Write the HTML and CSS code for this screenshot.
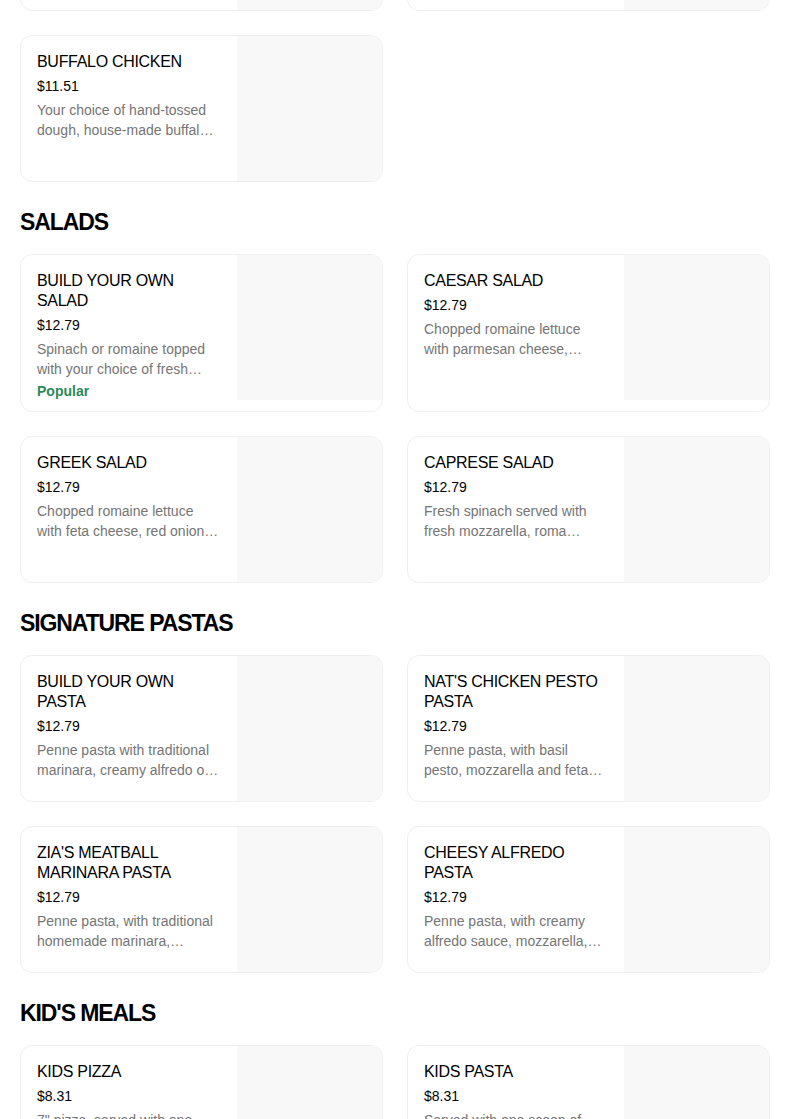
FILE: index.html
```html
<!DOCTYPE html>
<html>
	<head>
		<meta charset="UTF-8">
		<title>Menu</title>
		<link rel="stylesheet" href="styles.css">
	</head>
	<body>
		<main class="menu">
			<div class="grid">
				<div class="card">
					<div class="card_text">
						<h3 class="card_title">PEPPERONI</h3>
						<div class="card_price">$11.51</div>
						<p class="card_desc">Your choice of hand-tossed dough, house-made red sauce, mozzarella and pepperoni.</p>
					</div>
					<div class="card_img"></div>
				</div>
				<div class="card">
					<div class="card_text">
						<h3 class="card_title">MARGHERITA</h3>
						<div class="card_price">$11.51</div>
						<p class="card_desc">Your choice of hand-tossed dough, house-made red sauce, fresh mozzarella and basil.</p>
					</div>
					<div class="card_img"></div>
				</div>
				<div class="card">
					<div class="card_text">
						<h3 class="card_title">BUFFALO CHICKEN</h3>
						<div class="card_price">$11.51</div>
						<p class="card_desc">Your choice of hand-tossed dough, house-made buffalo sauce, mozzarella, grilled chicken, red onions and ranch drizzle.</p>
					</div>
					<div class="card_img"></div>
				</div>
			</div>

			<h2 class="section_title">SALADS</h2>
			<div class="grid">
				<div class="card">
					<div class="card_text">
						<h3 class="card_title">BUILD YOUR OWN SALAD</h3>
						<div class="card_price">$12.79</div>
						<p class="card_desc">Spinach or romaine topped with your choice of fresh vegetables, cheeses and dressing.</p>
						<div class="card_tag">Popular</div>
					</div>
					<div class="card_img"></div>
				</div>
				<div class="card">
					<div class="card_text">
						<h3 class="card_title">CAESAR SALAD</h3>
						<div class="card_price">$12.79</div>
						<p class="card_desc">Chopped romaine lettuce with parmesan cheese, croutons and caesar dressing.</p>
					</div>
					<div class="card_img"></div>
				</div>
				<div class="card">
					<div class="card_text">
						<h3 class="card_title">GREEK SALAD</h3>
						<div class="card_price">$12.79</div>
						<p class="card_desc">Chopped romaine lettuce with feta cheese, red onions, kalamata olives, tomatoes and greek dressing.</p>
					</div>
					<div class="card_img"></div>
				</div>
				<div class="card">
					<div class="card_text">
						<h3 class="card_title">CAPRESE SALAD</h3>
						<div class="card_price">$12.79</div>
						<p class="card_desc">Fresh spinach served with fresh mozzarella, roma tomatoes, basil and balsamic glaze.</p>
					</div>
					<div class="card_img"></div>
				</div>
			</div>

			<h2 class="section_title">SIGNATURE PASTAS</h2>
			<div class="grid">
				<div class="card">
					<div class="card_text">
						<h3 class="card_title">BUILD YOUR OWN PASTA</h3>
						<div class="card_price">$12.79</div>
						<p class="card_desc">Penne pasta with traditional marinara, creamy alfredo or basil pesto sauce and your choice of toppings.</p>
					</div>
					<div class="card_img"></div>
				</div>
				<div class="card">
					<div class="card_text">
						<h3 class="card_title">NAT'S CHICKEN PESTO PASTA</h3>
						<div class="card_price">$12.79</div>
						<p class="card_desc">Penne pasta, with basil pesto, mozzarella and feta cheese, grilled chicken and tomatoes.</p>
					</div>
					<div class="card_img"></div>
				</div>
				<div class="card">
					<div class="card_text">
						<h3 class="card_title">ZIA'S MEATBALL MARINARA PASTA</h3>
						<div class="card_price">$12.79</div>
						<p class="card_desc">Penne pasta, with traditional homemade marinara, meatballs and mozzarella cheese.</p>
					</div>
					<div class="card_img"></div>
				</div>
				<div class="card">
					<div class="card_text">
						<h3 class="card_title">CHEESY ALFREDO PASTA</h3>
						<div class="card_price">$12.79</div>
						<p class="card_desc">Penne pasta, with creamy alfredo sauce, mozzarella, and parmesan cheese.</p>
					</div>
					<div class="card_img"></div>
				</div>
			</div>

			<h2 class="section_title">KID'S MEALS</h2>
			<div class="grid">
				<div class="card">
					<div class="card_text">
						<h3 class="card_title">KIDS PIZZA</h3>
						<div class="card_price">$8.31</div>
						<p class="card_desc">7" pizza, served with one topping of your choice and a drink.</p>
					</div>
					<div class="card_img"></div>
				</div>
				<div class="card">
					<div class="card_text">
						<h3 class="card_title">KIDS PASTA</h3>
						<div class="card_price">$8.31</div>
						<p class="card_desc">Served with one scoop of marinara or alfredo sauce and a drink.</p>
					</div>
					<div class="card_img"></div>
				</div>
			</div>
		</main>
	</body>
</html>
```

FILE: styles.css
```css
body {
	margin: 0;
	background: #fff;
	color: #000;
	font-family: "Liberation Sans", Arial, sans-serif;
}

.menu {
	width: 750px;
	margin: -136px 0 0 20px;
	padding-bottom: 40px;
}

.grid {
	display: grid;
	grid-template-columns: 1fr 1fr;
	gap: 24px;
}

.section_title {
	margin: 24px 0 16px;
	font-size: 23px;
	line-height: 32px;
	font-weight: 700;
	letter-spacing: -1.1px;
}

.card {
	display: flex;
	align-items: flex-start;
	border: 1px solid #efefef;
	border-radius: 12px;
	overflow: hidden;
	min-height: 145px;
}

.card_text {
	flex: 1;
	min-width: 0;
	padding: 16px 16px 10px;
}

.card_title {
	margin: 0;
	font-size: 16px;
	line-height: 20px;
	font-weight: 500;
	letter-spacing: -0.3px;
}

.card_price {
	margin-top: 4px;
	font-size: 14px;
	line-height: 20px;
}

.card_desc {
	margin: 4px 0 0;
	font-size: 14px;
	line-height: 20px;
	color: #757575;
	display: -webkit-box;
	-webkit-line-clamp: 2;
	-webkit-box-orient: vertical;
	overflow: hidden;
}

.card_tag {
	margin-top: 2px;
	font-size: 14px;
	line-height: 20px;
	font-weight: 700;
	color: #2a8a57;
}

.card_img {
	flex: none;
	width: 145px;
	height: 145px;
	background: #f8f8f8;
}
```
